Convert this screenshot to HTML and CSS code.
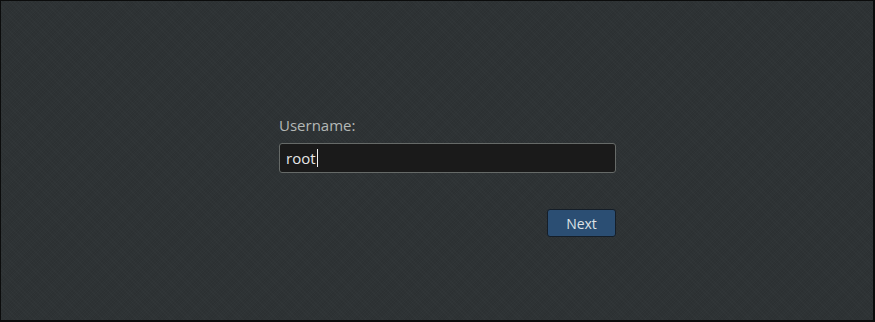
FILE: index.html
```html
<!DOCTYPE html>
<html lang="en">
<head>
  <meta charset="UTF-8" />
  <title>Login</title>
  <link rel="stylesheet" href="styles.css">
</head>
<body>
  <div class="screen">
    <div class="login">
      <label class="label" for="user">Username:</label>
      <div class="entry" id="user">root<span class="caret"></span></div>
      <div class="actions">
        <button class="next-button">Next</button>
      </div>
    </div>
  </div>
</body>
</html>
```

FILE: styles.css
```css
* {
  margin: 0;
  padding: 0;
  box-sizing: border-box;
}
body, html {
  width: 100%;
  height: 100%;
  background: #000;
  font-family: 'Open Sans', 'DejaVu Sans', sans-serif;
  overflow: hidden;
}

.screen {
  width: 875px;
  height: 322px;
  background-color: #2e3335;
  background-image:
    repeating-linear-gradient(45deg, rgba(255,255,255,0.015) 0 1px, transparent 1px 3px),
    repeating-linear-gradient(-45deg, rgba(0,0,0,0.05) 0 1px, transparent 1px 2px);
  border-style: solid;
  border-color: #0b0c0c;
  border-width: 1px 2px 2px 1px;
  padding: 113px 0 0 278px;
}

.login {
  width: 337px;
  display: flex;
  flex-direction: column;
}

.label {
  color: #b4b8b6;
  font-size: 15px;
  line-height: 22px;
  margin-bottom: 7px;
}

.entry {
  height: 30px;
  background: #1a1a1a;
  border: 1px solid #666a68;
  border-radius: 3px;
  color: #e6e6e6;
  font-size: 15px;
  line-height: 28px;
  padding-left: 6px;
  display: flex;
  align-items: center;
}

.caret {
  display: inline-block;
  width: 1px;
  height: 18px;
  background: #f0f0f0;
  margin-left: 1px;
}

.actions {
  display: flex;
  justify-content: flex-end;
  margin-top: 36px;
}

.next-button {
  width: 69px;
  height: 28px;
  background: #2b4e73;
  border: 1px solid #151e28;
  border-radius: 3px;
  color: #dde2e6;
  font-family: inherit;
  font-size: 14px;
  cursor: pointer;
}
```
